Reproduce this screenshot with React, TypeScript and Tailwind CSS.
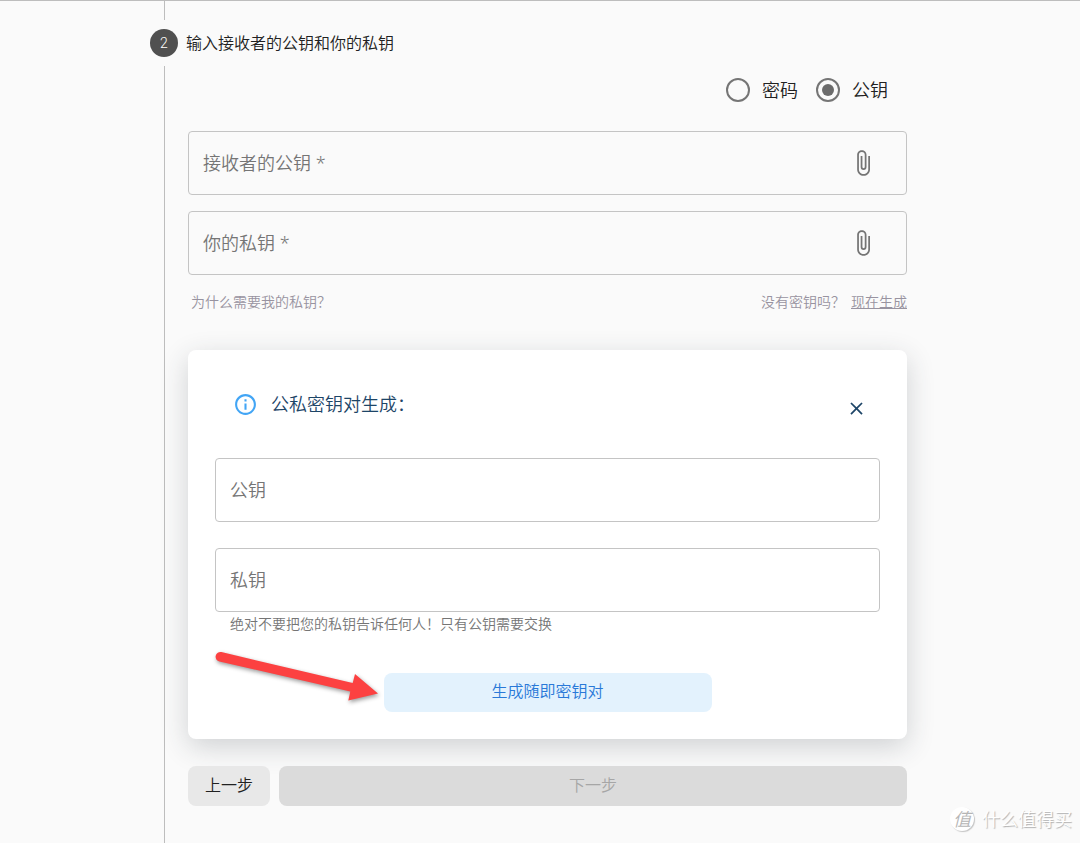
import { useState } from "react";
import { MdAttachFile, MdClose, MdInfoOutline } from "react-icons/md";

interface KeyFieldProps {
  id: string;
  label: string;
  attach?: boolean;
}

function KeyField({ id, label, attach }: KeyFieldProps) {
  return (
    <div className="flex h-16 items-center rounded border border-[#c4c4c4] pr-[29px] pl-[14px]">
      <input
        id={id}
        type="text"
        aria-label={label}
        placeholder={label}
        className="min-w-0 flex-1 bg-transparent text-lg text-[#333333] outline-none placeholder:text-[#757575]"
      />
      {attach && (
        <button type="button" aria-label="选择文件" className="text-[#757575]">
          <MdAttachFile size={28} />
        </button>
      )}
    </div>
  );
}

interface MethodRadioProps {
  value: string;
  label: string;
  selected: string;
  onSelect: (value: string) => void;
}

function MethodRadio({ value, label, selected, onSelect }: MethodRadioProps) {
  return (
    <label className="flex items-center gap-3 text-lg">
      <input
        type="radio"
        name="method"
        value={value}
        checked={selected === value}
        onChange={() => onSelect(value)}
        className="flex h-6 w-6 appearance-none items-center justify-center rounded-full border-2 border-[#757575] before:h-3 before:w-3 before:rounded-full checked:before:bg-[#6b6b6b]"
      />
      {label}
    </label>
  );
}

function Arrow() {
  return (
    <svg
      className="pointer-events-none absolute bottom-7 left-6 drop-shadow-[1px_2px_2px_rgba(0,0,0,0.4)]"
      width="170"
      height="64"
      viewBox="0 0 170 64"
      aria-hidden="true"
    >
      <path
        d="M9.4 5.1 L140.7 36 L143 27 L166 46.5 L136.3 53.5 L138.3 44.5 L7.4 14.5 A4.8 4.8 0 0 1 9.4 5.1 Z"
        fill="#fc4141"
      />
    </svg>
  );
}

function KeyPairCard() {
  return (
    <section className="relative mt-[38px] flex flex-col rounded-lg bg-white p-[27px] shadow-[0_8px_28px_rgba(40,50,60,0.2)]">
      <header className="flex h-[54px] items-center pr-[13px] pl-[18px] text-[#1d4567]">
        <MdInfoOutline size={25} className="text-[#42a5f5]" />
        <h2 className="ml-[13px] flex-1 text-lg">公私密钥对生成：</h2>
        <button type="button" aria-label="关闭" className="mt-2">
          <MdClose size={21} />
        </button>
      </header>

      <div className="mt-[27px] flex flex-col gap-[26px]">
        <KeyField id="new-public-key" label="公钥" />
        <KeyField id="new-private-key" label="私钥" />
      </div>
      <p className="mt-[2px] pl-[15px] text-sm text-[#757575]">
        绝对不要把您的私钥告诉任何人！只有公钥需要交换
      </p>

      <button
        type="button"
        className="mt-[39px] h-[39px] w-[328px] self-center rounded-lg bg-[#e3f2fd] pb-[3px] text-base text-[#2979d8]"
      >
        生成随即密钥对
      </button>
      <Arrow />
    </section>
  );
}

function Watermark() {
  return (
    <div className="absolute right-2 bottom-[10px] flex items-center gap-2 text-lg text-white [text-shadow:1px_1px_1px_#b0b0b0]">
      <span className="flex h-6 w-6 items-center justify-center rounded-full bg-white text-lg text-[#b5b5b5] italic shadow-[1px_1px_1px_#c4c4c4] [text-shadow:none]">
        值
      </span>
      什么值得买
    </div>
  );
}

export default function App() {
  const [method, setMethod] = useState("key");

  return (
    <div className="relative flex min-h-screen flex-col border-t border-[#bdbdbd] bg-[#fafafa] font-['Noto_Sans','Noto_Sans_CJK_SC',sans-serif] font-[350] text-[#212121]">
      <main className="mx-auto flex w-full max-w-[780px] flex-1 flex-col">
        <div className="ml-[14px] h-[19px] border-l border-[#bdbdbd]" />

        <div className="my-[9px] flex h-7 items-center gap-2">
          <span className="flex h-7 w-7 items-center justify-center rounded-full bg-[#505050] font-['Roboto',sans-serif] text-sm text-white">
            2
          </span>
          <h1 className="text-base">输入接收者的公钥和你的私钥</h1>
        </div>

        <form
          className="ml-[14px] flex-1 border-l border-[#bdbdbd] pr-[23px] pl-[23px]"
          onSubmit={(e) => e.preventDefault()}
        >
          <div className="flex h-12 items-center justify-end gap-[18px] pr-[19px]">
            <MethodRadio
              value="password"
              label="密码"
              selected={method}
              onSelect={setMethod}
            />
            <MethodRadio
              value="key"
              label="公钥"
              selected={method}
              onSelect={setMethod}
            />
          </div>

          <div className="mt-[17px] flex flex-col gap-4">
            <KeyField id="public-key" label="接收者的公钥 *" attach />
            <KeyField id="private-key" label="你的私钥 *" attach />
          </div>

          <div className="mt-[17px] flex justify-between pl-[3px] text-sm text-[#9893a0]">
            <span>为什么需要我的私钥？</span>
            <span className="flex gap-[6px]">
              没有密钥吗？
              <a href="#generate" className="underline">
                现在生成
              </a>
            </span>
          </div>

          <KeyPairCard />

          <div className="relative mt-[27px] flex gap-[9px]">
            <button
              type="button"
              className="h-10 w-[82px] rounded-lg bg-[#e8e8e8] pb-[3px] text-base"
            >
              上一步
            </button>
            <button
              type="submit"
              disabled
              className="h-10 flex-1 rounded-lg bg-[#dbdbdb] pb-[3px] text-base text-[#a6a6a6]"
            >
              下一步
            </button>
          </div>
        </form>
      </main>
      <Watermark />
    </div>
  );
}
